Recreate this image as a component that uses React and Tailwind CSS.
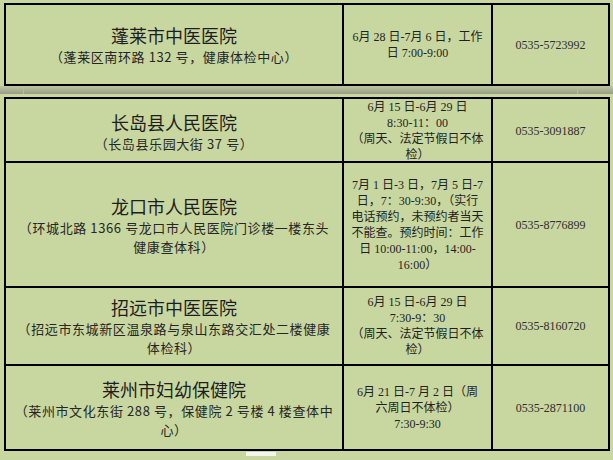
import React from 'react';

const rows = [
    {
        name: '长岛县人民医院',
        address: ['（长岛县乐园大街 37 号）'],
        time: ['6月 15 日-6月 29 日', '8:30-11：00', '（周天、法定节假日不体', '检）'],
        phone: '0535-3091887',
        height: 'h-[64px]',
    },
    {
        name: '龙口市人民医院',
        address: ['（环城北路 1366 号龙口市人民医院门诊楼一楼东头', '健康查体科）'],
        time: [
            '7月 1 日-3 日，7月 5 日-7',
            '日，7：30-9:30，（实行',
            '电话预约，未预约者当天',
            '不能查。预约时间：工作',
            '日 10:00-11:00，14:00-',
            '16:00）',
        ],
        phone: '0535-8776899',
        height: 'h-[125px]',
    },
    {
        name: '招远市中医医院',
        address: ['（招远市东城新区温泉路与泉山东路交汇处二楼健康', '体检科）'],
        time: ['6月 15 日-6月 29 日', '7:30-9：30', '（周天、法定节假日不体', '检）'],
        phone: '0535-8160720',
        height: 'h-[78px]',
    },
    {
        name: '莱州市妇幼保健院',
        address: ['（莱州市文化东街 288 号，保健院 2 号楼 4 楼查体中', '心）'],
        time: ['6月 21 日-7 月 2 日（周', '六周日不体检）', '7:30-9:30'],
        phone: '0535-2871100',
        height: 'h-[83px]',
    },
];

const sans = { fontFamily: '"Noto Sans CJK SC", "Noto Sans", sans-serif' };
const serif = { fontFamily: '"Liberation Serif", "Noto Sans CJK SC", serif' };

const Row = ({ row, last }) => (
    <div className={`grid grid-cols-[338px_149px_1fr] ${row.height} ${last ? '' : 'border-b-2 border-black'}`}>
        <div className="flex flex-col items-center justify-center border-r-2 border-black text-[#1e1e1e]" style={sans}>
            <p className="text-[18px] leading-[24px] font-normal">{row.name}</p>
            {row.address.map((line, i) => (
                <p key={i} className="text-[13px] leading-[19px] tracking-[0.6px] whitespace-nowrap text-[#262626]">
                    {line}
                </p>
            ))}
        </div>
        <div className="flex flex-col items-center justify-center border-r-2 border-black text-[12px] leading-[16px] text-[#1f1f1f]" style={serif}>
            {row.time.map((line, i) => (
                <p key={i} className="whitespace-nowrap">{line}</p>
            ))}
        </div>
        <div className="flex items-center justify-center text-[12px] text-[#2e2e2e]" style={serif}>
            {row.phone}
        </div>
    </div>
);

export default function App() {
    return (
        <div className="w-[613px] h-[460px] overflow-hidden bg-[#c8d6a0] pt-[3px]">
            {/* top table */}
            <div className="ml-[4px] w-[606px] border-2 border-black">
                <Row
                    last
                    row={{
                        name: '蓬莱市中医医院',
                        address: ['（蓬莱区南环路 132 号，健康体检中心）'],
                        time: ['6月 28 日-7月 6 日，工作', '日 7:00-9:00'],
                        phone: '0535-5723992',
                        height: 'h-[79px]',
                    }}
                />
            </div>

            {/* page break strip */}
            <div className="relative h-[8px] bg-gradient-to-b from-[#bcc5a6] to-[#969f81]">
                <div className="absolute left-[23px] top-0 h-[8px] w-px bg-[#b5bca0]" />
                <div className="absolute left-[577px] top-0 h-[8px] w-px bg-[#b5bca0]" />
            </div>
            <div className="h-[3px]" />

            {/* second table */}
            <div className="ml-[4px] w-[606px] border-2 border-black">
                {rows.map((row, i) => (
                    <Row key={row.name} row={row} last={i === rows.length - 1} />
                ))}
            </div>
            <div className="ml-[246px] mt-[1px] h-[4px] w-[30px] bg-[#f4f6ee]" />
        </div>
    );
}
